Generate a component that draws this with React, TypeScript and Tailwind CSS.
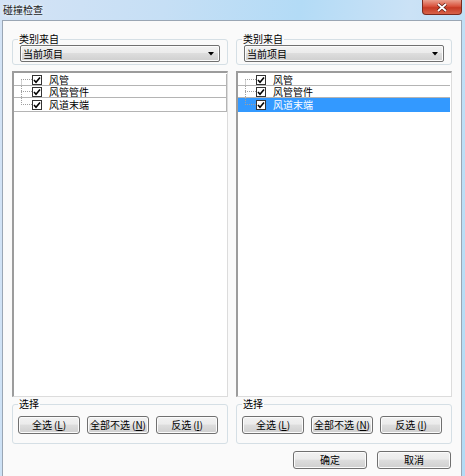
import React from "react";

type RowKind = "plain" | "focus" | "selected";
type Pos = "first" | "mid" | "last";

function Check() {
  return (
    <span className="flex h-[10px] w-[10px] shrink-0 items-center justify-center border border-[#333333] bg-white">
      <svg width="8" height="8" viewBox="0 0 8 8">
        <path d="M1 4 L3 6.2 L7 1.5" stroke="#000" strokeWidth="1.6" fill="none" />
      </svg>
    </span>
  );
}

function TreeLine({ pos }: { pos: Pos }) {
  const top = pos === "first" ? "50%" : "0";
  const bottom = pos === "last" ? "50%" : "100%";
  return (
    <svg width="11" height="100%" className="h-full shrink-0">
      <line x1="0.5" y1={top} x2="0.5" y2={bottom} stroke="#a0a0a0" strokeDasharray="1 1" />
      <line x1="0" y1="50%" x2="11" y2="50%" stroke="#a0a0a0" strokeDasharray="1 1" />
    </svg>
  );
}

function Row({ label, pos, kind }: { label: string; pos: Pos; kind: RowKind }) {
  const base = "flex items-center pl-[7px] border-b";
  if (kind === "selected") {
    return (
      <div className={`${base} h-[14px] border-[#3399ff] bg-[#3399ff] text-white`}>
        <TreeLine pos={pos} />
        <Check />
        <span className="ml-[7px] leading-[10px]">{label}</span>
      </div>
    );
  }
  return (
    <div className={`${base} ${kind === "focus" ? "h-[14px]" : "h-[12px]"} border-[#b4b4b4]`}>
      <TreeLine pos={pos} />
      <Check />
      <span className="ml-[7px] leading-[10px]">{label}</span>
    </div>
  );
}

function Btn({ label, mn, w }: { label: string; mn: string; w: string }) {
  return (
    <button
      className={`${w} flex h-[18px] items-center justify-center rounded-[3px] border border-[#707070] bg-[linear-gradient(#f2f2f2,#ebebeb_45%,#dddddd_50%,#cfcfcf)] text-[10px] leading-none text-black shadow-[inset_0_0_0_1px_#fbfbfb]`}
    >
      {label}
      {mn && (
        <span className="ml-[2px]">
          (<u>{mn}</u>)
        </span>
      )}
    </button>
  );
}

function Column({ selected }: { selected: boolean }) {
  return (
    <div className="flex flex-col">
      <fieldset className="h-[32px] rounded-[3px] border border-[#d5dfe5] px-[7px]">
        <legend className="-ml-[2px] px-[1px] text-[10px] leading-[12px]">类别来自</legend>
        <div className="flex h-[17px] items-center justify-between rounded-[2px] border border-[#707070] bg-[linear-gradient(#f2f2f2,#ebebeb_45%,#dddddd_50%,#cfcfcf)] pl-[2px] pr-[5px] shadow-[inset_0_0_0_1px_#fbfbfb]">
          <span className="text-[10px] leading-none">当前项目</span>
          <svg width="6" height="4" viewBox="0 0 6 4">
            <path d="M0 0 H6 L3 3.5 Z" fill="#000" />
          </svg>
        </div>
      </fieldset>

      <div className="mt-[6px] h-[326px] border-b border-l-2 border-r border-t-2 border-b-[#dcdcdc] border-l-[#9c9c9c] border-r-[#dcdcdc] border-t-[#9c9c9c] bg-white pt-[1px] text-[10px] leading-none">
        <div className={selected ? "mr-[1px]" : "border-r border-[#b4b4b4]"}>
          <Row label="风管" pos="first" kind="plain" />
          <Row label="风管管件" pos="mid" kind="plain" />
          <Row label="风道末端" pos="last" kind={selected ? "selected" : "focus"} />
        </div>
      </div>

      <fieldset className="mt-[1px] h-[46px] rounded-[3px] border border-[#d5dfe5] pl-[5px] pt-[6px]">
        <legend className="ml-0 px-[1px] text-[10px] leading-[12px]">选择</legend>
        <div className="flex gap-[7px]">
          <Btn label="全选" mn="L" w="w-[62px]" />
          <Btn label="全部不选" mn="N" w="w-[62px]" />
          <Btn label="反选" mn="I" w="w-[62px]" />
        </div>
      </fieldset>
    </div>
  );
}

export default function App() {
  return (
    <div className="flex h-[476px] w-[465px] flex-col overflow-hidden bg-[linear-gradient(100deg,#d4e3f5_0%,#c6dff5_30%,#b3dbf6_55%,#cbe2f6_75%,#b2dbf5_100%)] font-['Noto_Sans_CJK_SC',sans-serif] text-black">
      <div className="flex h-[20px] shrink-0 items-start justify-between">
        <span className="pl-[3px] pt-[4px] text-[10px] leading-[12px] text-[#1a1a1a] [text-shadow:0_0_4px_#ffffff]">
          碰撞检查
        </span>
        <div className="mr-[3px] flex h-[15px] w-[40px] items-center justify-center rounded-b-[4px] border border-t-0 border-[#7a2a1e] bg-[linear-gradient(#eaa08e,#d9533d_45%,#c63a24_55%,#d8634a)]">
          <svg width="12" height="9" viewBox="0 0 12 9">
            <path d="M2 1 L10 8 M10 1 L2 8" stroke="#5a1a10" strokeWidth="3.2" />
            <path d="M2 1 L10 8 M10 1 L2 8" stroke="#ffffff" strokeWidth="1.8" />
          </svg>
        </div>
      </div>

      <div className="ml-[2px] mr-[3px] flex-1 border border-b-0 border-[#9aa6b4] bg-[#fafafa] pt-[12px]">
        <div className="grid grid-cols-2 gap-[8px] pl-[9px] pr-[9px]">
          <Column selected={false} />
          <Column selected={true} />
        </div>
        <div className="mt-[7px] flex justify-end gap-[10px] pr-[10px]">
          <Btn label="确定" mn="" w="w-[74px]" />
          <Btn label="取消" mn="" w="w-[74px]" />
        </div>
      </div>
    </div>
  );
}
